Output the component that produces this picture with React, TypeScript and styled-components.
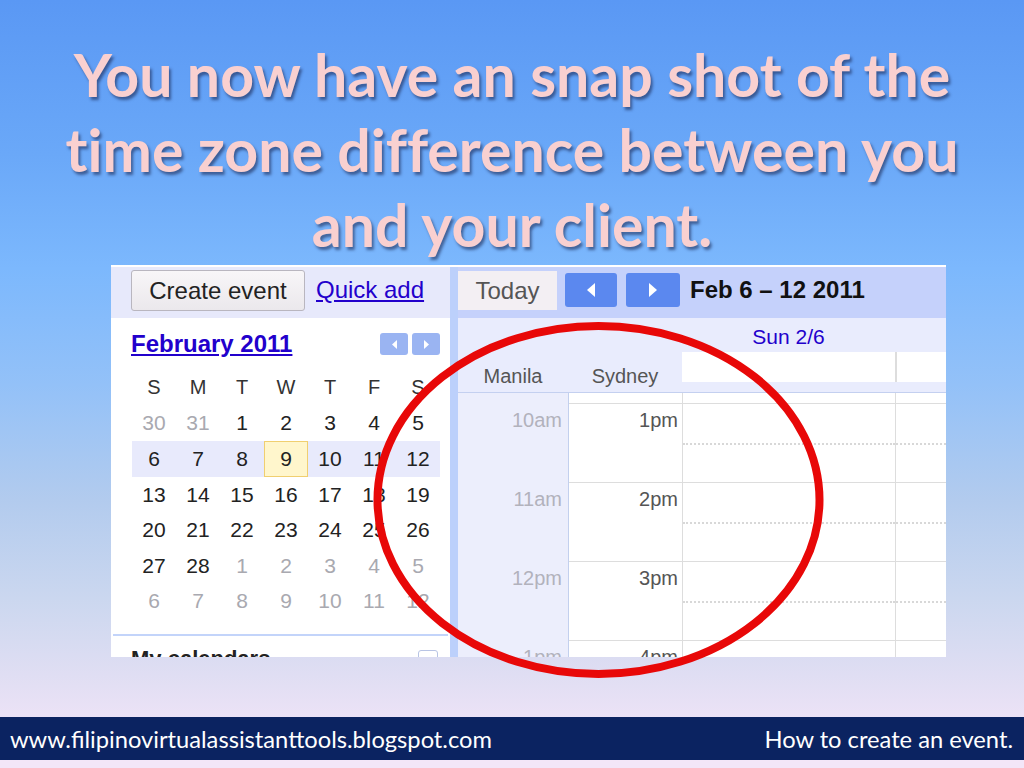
import React from "react";
import styled, { createGlobalStyle } from "styled-components";

const Global = createGlobalStyle`
  html, body { margin: 0; padding: 0; }
  body { width: 1024px; height: 768px; overflow: hidden; }
`;

const Page = styled.div`
  position: relative;
  width: 1024px;
  height: 768px;
  display: flex;
  flex-direction: column;
  overflow: hidden;
  font-family: "Liberation Sans", Arial, sans-serif;
  background: linear-gradient(
    180deg,
    #5a98f4 0%,
    #6aa8f8 20%,
    #7cb8fd 35%,
    #93c1f8 50%,
    #b2cbee 65%,
    #cbd7ef 78%,
    #e0def3 88%,
    #ebe2f6 93%,
    #f2e6f8 100%
  );
`;

const Title = styled.h1`
  flex: none;
  margin: 0;
  height: 265px;
  box-sizing: border-box;
  padding-top: 37px;
  font-family: Lato, "Open Sans", sans-serif;
  font-weight: 700;
  font-size: 59px;
  line-height: 75px;
  font-variant-ligatures: none;
  text-align: center;
  color: #f9d0d0;
  text-shadow: 2px 3px 3px rgba(20, 30, 70, 0.55);
`;

const Shot = styled.div`
  flex: none;
  margin-left: 111px;
  width: 835px;
  height: 392px;
  box-sizing: border-box;
  border-top: 2px solid #ffffff;
  display: flex;
  overflow: hidden;
  background: #ffffff;
`;

const LeftPane = styled.div`
  width: 339px;
  flex: none;
  display: flex;
  flex-direction: column;
  background: #ffffff;
  & > * { flex-shrink: 0; }
`;

const LeftToolbar = styled.div`
  height: 51px;
  box-sizing: border-box;
  padding: 0 0 5px 20px;
  display: flex;
  align-items: center;
  gap: 11px;
  background: #e7e9fb;
`;

const CreateButton = styled.div`
  width: 174px;
  height: 41px;
  box-sizing: border-box;
  border: 1px solid #b9b6bf;
  border-radius: 3px;
  background: linear-gradient(180deg, #f8f6f8 0%, #ebe8ec 100%);
  font-size: 24px;
  line-height: 39px;
  text-align: center;
  color: #222222;
`;

const LinkText = styled.span<{ $bold?: boolean }>`
  color: #2200cc;
  text-decoration: underline;
  font-size: 24px;
  font-weight: ${(p) => (p.$bold ? 700 : 400)};
`;

const MonthHeader = styled.div`
  height: 52px;
  box-sizing: border-box;
  padding: 0 10px 0 20px;
  display: flex;
  align-items: center;
  justify-content: space-between;
`;

const NavPair = styled.div`
  display: flex;
  gap: 4px;
`;

const MiniNav = styled.div`
  width: 28px;
  height: 22px;
  border-radius: 3px;
  background: #9ab4f2;
  display: flex;
  align-items: center;
  justify-content: center;
`;

const DayGrid = styled.div`
  margin-left: 21px;
  display: grid;
  grid-template-columns: repeat(7, 44px);
  grid-auto-rows: 35.6px;
`;

const DayCell = styled.div<{ $muted?: boolean; $week?: boolean; $today?: boolean }>`
  display: flex;
  align-items: center;
  justify-content: center;
  box-sizing: border-box;
  font-size: 21px;
  color: ${(p) => (p.$muted ? "#a9a9b0" : "#222222")};
  background: ${(p) => (p.$today ? "#fff6cc" : p.$week ? "#e8eafc" : "transparent")};
  border: ${(p) => (p.$today ? "1px solid #f0cf70" : "none")};
`;

const DayHead = styled(DayCell)`
  color: #333333;
  font-size: 20px;
`;

const Divider = styled.div`
  margin: 15px 2px 0 2px;
  border-top: 2px solid #c3d4fa;
`;

const MyCals = styled.div`
  padding: 10px 12px 0 20px;
  display: flex;
  justify-content: space-between;
  align-items: flex-start;
  font-size: 22px;
  font-weight: 700;
  color: #222222;
`;

const SmallBox = styled.div`
  width: 18px;
  height: 18px;
  margin-top: 4px;
  border: 1px solid #b8c4e4;
  border-radius: 3px;
`;

const Splitter = styled.div`
  width: 8px;
  flex: none;
  background: #bcd0fb;
`;

const RightPane = styled.div`
  flex: 1;
  display: flex;
  flex-direction: column;
  min-width: 0;
  & > * { flex-shrink: 0; }
`;

const RightToolbar = styled.div`
  height: 51px;
  box-sizing: border-box;
  padding-bottom: 5px;
  display: flex;
  align-items: center;
  background: #c5d1fb;
`;

const TodayButton = styled.div`
  width: 99px;
  height: 39px;
  background: #f3eff3;
  color: #555555;
  font-size: 24px;
  line-height: 39px;
  text-align: center;
`;

const ArrowButton = styled.div<{ $w: number; $gap: number }>`
  width: ${(p) => p.$w}px;
  height: 34px;
  margin-left: ${(p) => p.$gap}px;
  border-radius: 3px;
  background: #5b88ef;
  display: flex;
  align-items: center;
  justify-content: center;
`;

const RangeLabel = styled.div`
  margin-left: 10px;
  font-size: 24px;
  font-weight: 700;
  color: #111111;
`;

const cols = "110px 114px 213px 1fr";

const DayHeader = styled.div`
  display: grid;
  grid-template-columns: ${cols};
  grid-template-rows: 34px 30px 10px;
  background: #e9ecfd;
  border-bottom: 1px solid #c4d0f0;
`;

const DayName = styled.div`
  grid-column: 3;
  grid-row: 1;
  display: flex;
  align-items: center;
  justify-content: center;
  padding-top: 4px;
  color: #2200cc;
  font-size: 21px;
`;

const AllDay = styled.div<{ $col: number; $line?: boolean }>`
  grid-column: ${(p) => p.$col};
  grid-row: 2;
  background: #ffffff;
  border-left: ${(p) => (p.$line ? "2px solid #dddddd" : "none")};
`;

const ZoneLabel = styled.div<{ $col: number }>`
  grid-column: ${(p) => p.$col};
  grid-row: 2 / 4;
  align-self: end;
  padding-bottom: 4px;
  text-align: center;
  color: #555555;
  font-size: 20px;
`;

const Body = styled.div`
  display: grid;
  grid-template-columns: ${cols};
  background: #ffffff;
`;

const ZoneCol = styled.div<{ $tint?: boolean; $edge?: string }>`
  box-sizing: border-box;
  padding-top: 10px;
  background: ${(p) => (p.$tint ? "#eceefc" : "#ffffff")};
  border-left: ${(p) => (p.$edge ? `1px solid ${p.$edge}` : "none")};
`;

const HourSlot = styled.div<{ $line?: boolean; $pad: number; $color: string }>`
  height: 79px;
  box-sizing: border-box;
  border-top: ${(p) => (p.$line ? "1px solid #dddddd" : "1px solid transparent")};
  padding: 5px ${(p) => p.$pad}px 0 0;
  text-align: right;
  font-size: 20px;
  color: ${(p) => p.$color};
`;

const DaySlot = styled.div`
  height: 79px;
  box-sizing: border-box;
  border-top: 1px solid #dddddd;
  display: flex;
  flex-direction: column;
`;

const HalfTop = styled.div`
  height: 39px;
`;

const HalfBottom = styled.div`
  flex: 1;
  border-top: 2px dotted #d8d8d8;
`;

const Overlay = styled.svg`
  position: absolute;
  left: 373px;
  top: 322px;
  width: 451px;
  height: 356px;
  pointer-events: none;
`;

const Footer = styled.div`
  flex: none;
  margin-top: auto;
  height: 43px;
  padding: 0 11px 0 10px;
  display: flex;
  align-items: center;
  justify-content: space-between;
  background: #0b2361;
  color: #ffffff;
  font-family: Lato, "Open Sans", sans-serif;
  font-size: 23.7px;
`;

const BottomStrip = styled.div`
  flex: none;
  height: 8px;
  background: #f3e6f8;
`;

const Tri = ({ dir, w, h, color }: { dir: "l" | "r"; w: number; h: number; color: string }) => (
  <svg width={w} height={h} viewBox={`0 0 ${w} ${h}`}>
    {dir === "l" ? (
      <polygon points={`${w},0 ${w},${h} 0,${h / 2}`} fill={color} />
    ) : (
      <polygon points={`0,0 0,${h} ${w},${h / 2}`} fill={color} />
    )}
  </svg>
);

type Day = { n: number; muted?: boolean };
const weeks: Day[][] = [
  [{ n: 30, muted: true }, { n: 31, muted: true }, { n: 1 }, { n: 2 }, { n: 3 }, { n: 4 }, { n: 5 }],
  [6, 7, 8, 9, 10, 11, 12].map((n) => ({ n })),
  [13, 14, 15, 16, 17, 18, 19].map((n) => ({ n })),
  [20, 21, 22, 23, 24, 25, 26].map((n) => ({ n })),
  [{ n: 27 }, { n: 28 }, { n: 1, muted: true }, { n: 2, muted: true }, { n: 3, muted: true }, { n: 4, muted: true }, { n: 5, muted: true }],
  [6, 7, 8, 9, 10, 11, 12].map((n) => ({ n, muted: true })),
];

const manila = ["10am", "11am", "12pm", "1pm"];
const sydney = ["1pm", "2pm", "3pm", "4pm"];

export default function App() {
  return (
    <Page>
      <Global />
      <Title>
        You now have an snap shot of the
        <br />
        time zone difference between you
        <br />
        and your client.
      </Title>

      <Shot>
        <LeftPane>
          <LeftToolbar>
            <CreateButton>Create event</CreateButton>
            <LinkText>Quick add</LinkText>
          </LeftToolbar>
          <MonthHeader>
            <LinkText $bold>February 2011</LinkText>
            <NavPair>
              <MiniNav>
                <Tri dir="l" w={5} h={9} color="#ffffff" />
              </MiniNav>
              <MiniNav>
                <Tri dir="r" w={5} h={9} color="#ffffff" />
              </MiniNav>
            </NavPair>
          </MonthHeader>
          <DayGrid>
            {["S", "M", "T", "W", "T", "F", "S"].map((d, i) => (
              <DayHead key={`h${i}`}>{d}</DayHead>
            ))}
            {weeks.map((w, wi) =>
              w.map((d, di) => (
                <DayCell
                  key={`${wi}-${di}`}
                  $muted={d.muted}
                  $week={wi === 1}
                  $today={wi === 1 && d.n === 9}
                >
                  {d.n}
                </DayCell>
              ))
            )}
          </DayGrid>
          <Divider />
          <MyCals>
            <span>My calendars</span>
            <SmallBox />
          </MyCals>
        </LeftPane>

        <Splitter />

        <RightPane>
          <RightToolbar>
            <TodayButton>Today</TodayButton>
            <ArrowButton $w={52} $gap={8}>
              <Tri dir="l" w={8} h={14} color="#ffffff" />
            </ArrowButton>
            <ArrowButton $w={54} $gap={9}>
              <Tri dir="r" w={8} h={14} color="#ffffff" />
            </ArrowButton>
            <RangeLabel>Feb 6 – 12 2011</RangeLabel>
          </RightToolbar>

          <DayHeader>
            <DayName>Sun 2/6</DayName>
            <AllDay $col={3} />
            <AllDay $col={4} $line />
            <ZoneLabel $col={1}>Manila</ZoneLabel>
            <ZoneLabel $col={2}>Sydney</ZoneLabel>
          </DayHeader>

          <Body>
            <ZoneCol $tint>
              {manila.map((t) => (
                <HourSlot key={t} $pad={6} $color="#b2b2bc">
                  {t}
                </HourSlot>
              ))}
            </ZoneCol>
            <ZoneCol $edge="#c3d0ee">
              {sydney.map((t) => (
                <HourSlot key={t} $line $pad={4} $color="#555555">
                  {t}
                </HourSlot>
              ))}
            </ZoneCol>
            <ZoneCol $edge="#dddddd">
              {[0, 1, 2, 3].map((i) => (
                <DaySlot key={i}>
                  <HalfTop />
                  <HalfBottom />
                </DaySlot>
              ))}
            </ZoneCol>
            <ZoneCol $edge="#dddddd">
              {[0, 1, 2, 3].map((i) => (
                <DaySlot key={i}>
                  <HalfTop />
                  <HalfBottom />
                </DaySlot>
              ))}
            </ZoneCol>
          </Body>
        </RightPane>
      </Shot>

      <Footer>
        <span>www.filipinovirtualassistanttools.blogspot.com</span>
        <span>How to create an event.</span>
      </Footer>
      <BottomStrip />

      <Overlay viewBox="0 0 451 356">
        <ellipse cx="225.5" cy="178" rx="221" ry="174" fill="none" stroke="#e80808" strokeWidth="8" />
      </Overlay>
    </Page>
  );
}
